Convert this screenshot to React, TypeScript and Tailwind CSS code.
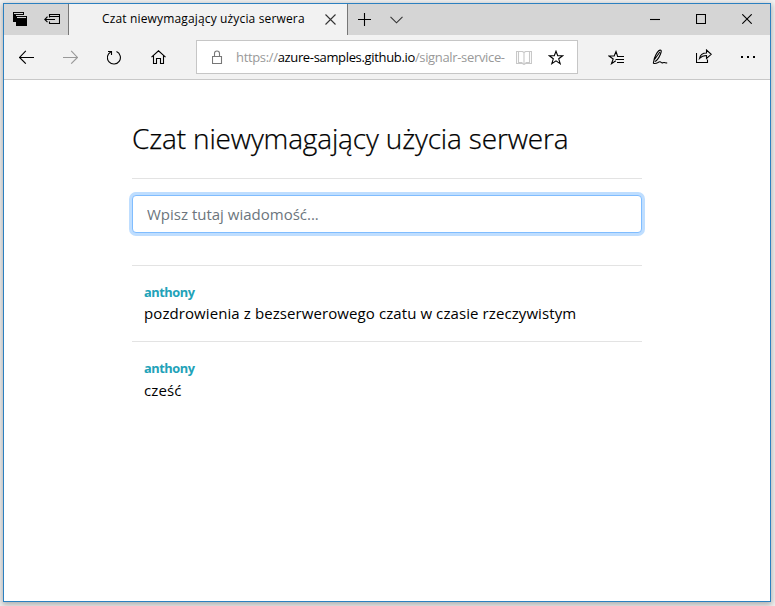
import React from "react";

type IconProps = { w: number; h: number; className?: string; children: React.ReactNode };

function Icon({ w, h, className = "", children }: IconProps) {
  return (
    <svg
      width={w}
      height={h}
      viewBox={`0 0 ${w} ${h}`}
      fill="none"
      stroke="currentColor"
      strokeWidth="1.1"
      className={`block shrink-0 ${className}`}
    >
      {children}
    </svg>
  );
}

function TitleBar() {
  return (
    <div className="flex h-[31px] bg-[#d5d5d5]">
      <div className="flex h-full w-[65px] shrink-0 border-r border-[#777777] pt-2">
        <Icon w={15} h={14} className="ml-[9px]">
          <path d="M0 0h11v10H0z" fill="currentColor" stroke="none" />
          <path d="M1 1.5h9" stroke="#d5d5d5" />
          <path d="M3 3h12v1H3z" fill="#d5d5d5" stroke="none" />
          <path d="M3 4h11v10H3z" fill="currentColor" stroke="none" />
          <path d="M4 5.500h9" stroke="#d5d5d5" />
        </Icon>
        <Icon w={16} h={12} className="ml-4 mt-px">
          <path d="M5.500 4.500V1.500h10v9h-10v-2M5.500 3.500h10M.8 6.500H11M3.500 3.700L.8 6.500l2.700 2.700" />
        </Icon>
      </div>
      <div className="flex h-full w-[279px] shrink-0 border-r border-[#777777] bg-[#f2f2f2]">
        <span className="ml-[33px] w-[215px] whitespace-nowrap text-[12px] leading-[30px] tracking-[0.15px] text-black">
          Czat niewymagający użycia serwera
        </span>
        <Icon w={11} h={11} className="ml-[8px] mt-[10px] text-[#333]">
          <path d="M.5.500l10 10M10.500.500l-10 10" />
        </Icon>
      </div>
      <Icon w={13} h={13} className="ml-[10px] mt-[9px]">
        <path d="M6.500 0v13M0 6.500h13" />
      </Icon>
      <Icon w={13} h={8} className="ml-[19px] mt-3 text-[#333]">
        <path d="M.5.800l6 6 6-6" />
      </Icon>
      <Icon w={10} h={11} className="ml-auto mt-[10px]">
        <path d="M0 5.500h10" />
      </Icon>
      <Icon w={10} h={10} className="ml-9 mt-[10px]">
        <path d="M.5.500h9v9h-9z" />
      </Icon>
      <Icon w={10} h={10} className="ml-9 mr-[18px] mt-[10px]">
        <path d="M.3.300l9.400 9.400M9.700.300L.3 9.700" />
      </Icon>
    </div>
  );
}

function ToolBar() {
  return (
    <div className="flex h-[45px] items-center border-b border-[#c8c8c8] bg-[#f2f2f2]">
      <Icon w={15} h={14} className="ml-[15px]">
        <path d="M0 7.500h15M6.800.800L.6 7.500l6.200 6.200" />
      </Icon>
      <Icon w={15} h={14} className="ml-[29px] text-[#999]">
        <path d="M0 7.500h15M8.200.800l6.200 6.700-6.200 6.200" />
      </Icon>
      <Icon w={14} h={15} className="ml-[29px]">
        <path d="M9.500 1.600a6.500 6.500 0 1 1-5.800.3M1 1.500h3.500v3.600" />
      </Icon>
      <Icon w={15} h={14} className="ml-[30px]">
        <path d="M.5 7.200l7-6.400 7 6.400M2.500 5.700v7.800h3V8.500h4v5h3V5.700" />
      </Icon>
      <div className="ml-[30px] flex h-[34px] w-[382px] shrink-0 items-center border border-[#c6c6c6] bg-white">
        <Icon w={11} h={14} className="ml-[15px] text-[#777]">
          <path d="M.5 6.500h9v7h-9zM2.500 6.500V3.500a2.500 2.500 0 0 1 5 0v3" />
        </Icon>
        <div className="ml-[13px] w-[274px] whitespace-nowrap text-[13px] leading-8 tracking-[-0.34px] text-[#999]">
          https://<span className="text-black">azure-samples.github.io</span>/signalr-service-
        </div>
        <Icon w={16} h={15} className="ml-[6px] text-[#c8c8c8]">
          <path d="M.5 1.500h6L8 2.500l1.500-1h6v12h-6L8 14.500l-1.500-1h-6zM8 2.500v12M2.500 1.500v11h4M13.500 1.500v11h-4" />
        </Icon>
        <Icon w={16} h={15} className="ml-4">
          <path d="M8 1.200l1.700 4.600h4.900l-3.900 3 1.500 4.800L8 10.800l-4.200 2.800 1.500-4.800-3.900-3h4.900z" />
        </Icon>
      </div>
      <Icon w={16} h={15} className="ml-[30px]">
        <path d="M9.500 6L8 1.500 6.200 6H1l4.200 3-1.700 4.700 4.300-2.900M9 6.500h7M7.500 9.500H16M9 12.500h7" />
      </Icon>
      <Icon w={16} h={16} className="ml-7">
        <path d="M1.300 14.300l1.100-5.100C4 5 6 1.500 8 1.100c2-.3 1.200 2.500.2 4.700-1.400 3.200-3.400 6-5.400 6.700M2.500 10.500L7.900 3M1.200 14.300c1.500.4 3 .3 4.800-.8 1.500-1 2.500-1 3.300 0 1 1.200 1.800-.3 2.900 0 1 .5 1.500.8 3 .3" />
      </Icon>
      <Icon w={16} h={14} className="mb-[2px] ml-7">
        <path d="M.5 4v9.500h11v-3M3.500 9.500C4.200 5.800 6.500 4 10.500 4V1l4.700 4.300-4.700 4.200v-3C7.500 6.500 5.300 7.500 3.500 9.500z" />
      </Icon>
      <Icon w={14} h={2} className="ml-[29px]">
        <path d="M0 1h2M6 1h2M12 1h2" strokeWidth="2" />
      </Icon>
    </div>
  );
}

function Message({ text, className }: { text: string; className: string }) {
  return (
    <li className="h-[76px] border-t border-[#e3e3e3] pl-[12px] pt-4">
      <div className="h-[21px] text-[12.8px] font-bold leading-[21px] tracking-[-0.45px] text-[#22a2b8]">
        anthony
      </div>
      <div className={`whitespace-nowrap text-[15px] tracking-[0.09px] text-black ${className}`}>{text}</div>
    </li>
  );
}

export default function App() {
  return (
    <div className="h-[606px] w-[775px] overflow-hidden bg-[#f2f2f2] pl-[3px] pt-[3px] font-['Open_Sans','Noto_Sans',sans-serif] text-black">
      <div className="h-[599px] w-[768px] border border-[#2c80c0] bg-white shadow-[0_2px_6px_1px_rgba(0,0,0,0.28)]">
        <TitleBar />
        <ToolBar />
        <main className="ml-32 w-[510px] pt-[39px]">
          <h1 className="h-[59px] whitespace-nowrap text-[28px] font-light leading-[38px] tracking-[-0.15px] [-webkit-text-stroke:0.25px_black]">
            Czat niewymagający użycia serwera
          </h1>
          <div className="border-t border-[#e3e3e3] pb-8 pt-4">
            <input
              className="block h-[38px] w-full rounded-[4px] border border-[#80bdff] bg-white px-[14px] text-[15px] shadow-[0_0_0_3px_#bfdeff] outline-none placeholder:text-[#6c757d]"
              placeholder="Wpisz tutaj wiadomość..."
            />
          </div>
          <ul>
            <Message text="pozdrowienia z bezserwerowego czatu w czasie rzeczywistym" className="leading-[20px]" />
            <Message text="cześć" className="leading-[22px]" />
          </ul>
        </main>
      </div>
    </div>
  );
}
